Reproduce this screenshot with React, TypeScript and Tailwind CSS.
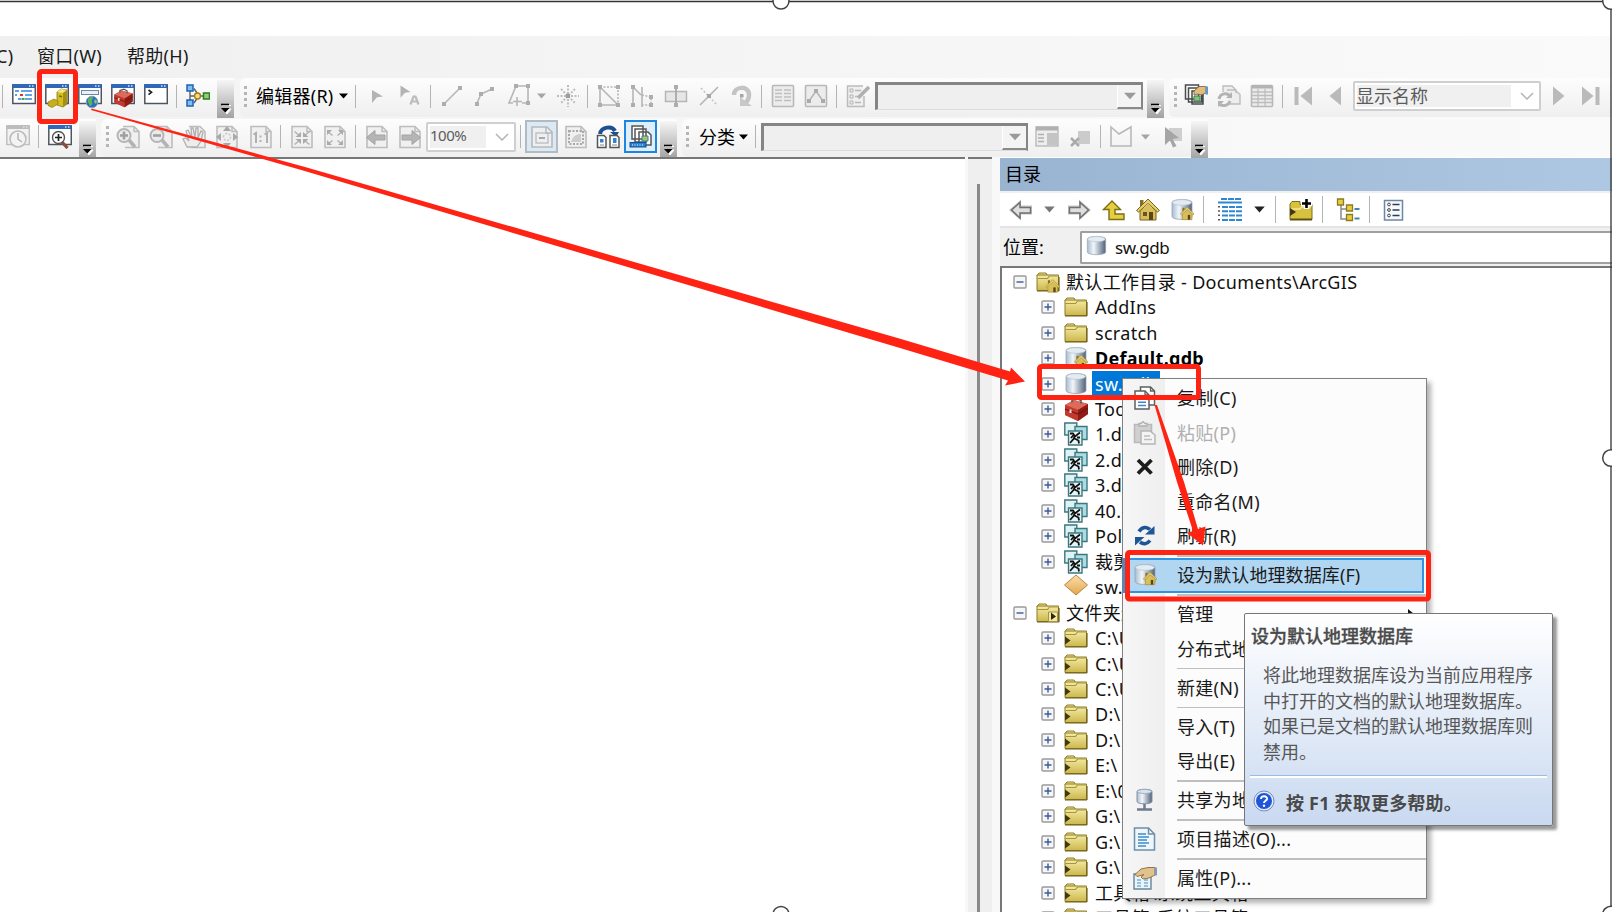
import type { ReactNode } from 'react';
import clsx from 'clsx';

type IconProps = { className?: string };

/* ---------- primitives ---------- */

function Svg({ className, children }: IconProps & { children: ReactNode }) {
  return (
    <svg viewBox="0 0 24 24" className={clsx('w-6 h-6 shrink-0', className)} fill="none">
      {children}
    </svg>
  );
}

function Sep({ className }: IconProps) {
  return <div className={clsx('w-px h-[23px] shrink-0 bg-[#b4b4b4]', className)} />;
}

function Grip({ className }: IconProps) {
  return (
    <div className={clsx('flex flex-col gap-[3px] w-[3px] shrink-0', className)}>
      {[0, 1, 2, 3].map(i => (
        <div key={i} className="w-[3px] h-[3px] bg-[#b5b5b5]" />
      ))}
    </div>
  );
}

function Caret({ className }: IconProps) {
  return (
    <svg viewBox="0 0 9 6" className={clsx('w-[9px] h-[6px] shrink-0', className)} fill="currentColor">
      <path d="M0 .5h9L4.500 5.500z" />
    </svg>
  );
}

function Overflow({ className }: IconProps) {
  return (
    <div
      className={clsx(
        'w-[17px] h-[38px] shrink-0 self-start mt-[2px] flex justify-center items-end pb-[3px] bg-linear-to-b from-[#f6f6f6] to-[#a2a2a2]',
        className,
      )}
    >
      <svg viewBox="0 0 11 12" className="w-[11px] h-[12px]">
        <path d="M2 2.500h9M3 6h8l-4 5z" fill="#fff" stroke="#fff" />
        <path d="M1 1.500h8" stroke="#000" strokeWidth="1.600" />
        <path d="M1 5h8.500L5.250 9.500z" fill="#000" />
      </svg>
    </div>
  );
}

function Bar({ className, children }: IconProps & { children: ReactNode }) {
  return (
    <div className={clsx('flex items-center h-9 shrink-0', className)}>
      {children}
    </div>
  );
}

/** Old-style sunken combo with a raised drop button. */
function SunkenCombo({ className }: IconProps) {
  return (
    <div className={clsx('flex justify-end shrink-0 h-7 bg-[#efefef] border-t-[3px] border-l-[3px] border-[#858585] border-b border-b-[#dcdcdc] border-r-2', className)}>
      <div className="w-6 h-full flex items-center justify-center bg-[#f4f4f4] border-b-2 border-l border-l-white border-b-[#8a8a8a] text-[#9a9a9a]">
        <Caret className="w-[12px] h-[8px]" />
      </div>
    </div>
  );
}

function Combo({ className, inner, children }: IconProps & { inner: string; children: ReactNode }) {
  return (
    <div className={clsx('flex items-center shrink-0 h-[30px] bg-white border-2 border-[#cfcfcf] rounded-[2px] pl-[2px] text-[#5c5c5c]', className)}>
      <div className={clsx('h-[22px] flex items-center bg-[#f0f0f0]', inner)}>{children}</div>
      <svg viewBox="0 0 14 8" className="w-[14px] h-2 ml-auto mr-[5px]" fill="none">
        <path d="M1 1l6 6 6-6" stroke="#b4b4b4" strokeWidth="1.500" />
      </svg>
    </div>
  );
}

/* ---------- toolbar icons ---------- */

/** Window frame shared by the "open window" buttons. */
function WindowFrame({ className, children, disabled }: IconProps & { children: ReactNode; disabled?: boolean }) {
  return (
    <Svg className={className}>
      <rect x=".8" y="1" width="22.500" height="18.500" fill={disabled ? '#f2f2f2' : '#fff'} stroke={disabled ? '#c0c0c0' : '#4d5560'} strokeWidth="1.500" />
      <rect x=".5" y="0" width="23" height="4" fill={disabled ? '#bcbcbc' : '#2f68b8'} />
      <path d="M17 2h1.500M20 2h1.500" stroke="#cfe0f5" strokeWidth="1.300" />
      {children}
    </Svg>
  );
}

function Toolbox() {
  return (
    <>
      <path d="M1 8l9-5 14 4v10l-10 7-13-6z" fill="#c9382c" />
      <path d="M1 8l9-5 14 4-10 6z" fill="#dd6a5b" />
      <path d="M1 8l13 5v11L1 18z" fill="#c23a2e" />
      <path d="M14 13l10-6v10l-10 7z" fill="#8f1c16" />
      <path d="M1 12l13 5 10-6" stroke="#74150f" strokeWidth="1.200" />
      <path d="M8 5.500V3l5-1.500 4 2v3" stroke="#555" strokeWidth="1.500" />
      <path d="M6.500 12.500v3.500" stroke="#f4dcd8" strokeWidth="2" />
    </>
  );
}

function TocWindow(p: IconProps) {
  return (
    <WindowFrame {...p}>
      <path d="M3 7h4M3 11h2M6 15h3" stroke="#2f7fd6" strokeWidth="1.600" />
      <path d="M9 7h11M13 11h7M13 15h7" stroke="#2f86dc" strokeWidth="1.600" />
      <path d="M8 11h3" stroke="#d63a2a" strokeWidth="2" />
      <path d="M9.500 15h3" stroke="#47a83a" strokeWidth="2" />
    </WindowFrame>
  );
}

function CatalogWindow(p: IconProps) {
  return (
    <WindowFrame {...p}>
      <path d="M12 8l4-3 6 1v14l-4 3-6-2z" fill="#d6bd22" stroke="#8c7a10" strokeWidth=".8" />
      <path d="M12 8l4-3 6 1-4 3z" fill="#f4e57a" />
      <path d="M18 9l4-3v14l-4 3z" fill="#a58f14" />
      <path d="M3 18l6-3 4 2v3l-6 3.500-4-2z" fill="#c8ae1c" stroke="#8c7a10" strokeWidth=".7" />
      <path d="M14 12l3 .8" stroke="#7b6b0c" strokeWidth="1.500" />
    </WindowFrame>
  );
}

function SearchWindow(p: IconProps) {
  return (
    <WindowFrame {...p}>
      <rect x="3.500" y="6.500" width="17" height="4" fill="#e8f0f8" stroke="#6f87a5" />
      <circle cx="14" cy="18" r="5.800" fill="#2c6dc0" stroke="#7d9fc5" />
      <path d="M10 15c2-3 5-2 5-1s-2 2-1 4-1 4-2 4-1-3-2-4z" fill="#5db456" />
      <path d="M17 15l2 2-1 3-2-2z" fill="#83cf6e" />
    </WindowFrame>
  );
}

function ToolboxWindow(p: IconProps) {
  return (
    <WindowFrame {...p}>
      <g transform="translate(2.500 4) scale(.8)">
        <Toolbox />
      </g>
    </WindowFrame>
  );
}

function PythonWindow(p: IconProps) {
  return (
    <WindowFrame {...p}>
      <path d="M4.500 6l3 2.300-3 2.300" stroke="#222" strokeWidth="1.700" />
    </WindowFrame>
  );
}

function ModelBuilder(p: IconProps) {
  return (
    <Svg {...p}>
      <path d="M4 4v16M4 12h14M8 4.500l4 6M8 19l4-6" stroke="#5a6470" strokeWidth="1.400" />
      <rect x="1" y="1" width="6" height="6" fill="#7cc1f2" stroke="#1e63b0" strokeWidth="1.500" />
      <rect x="1" y="16" width="6" height="6" fill="#7cc1f2" stroke="#1e63b0" strokeWidth="1.500" />
      <circle cx="11.500" cy="12" r="3" fill="#f5de79" stroke="#a67d17" strokeWidth="1.400" />
      <rect x="17.500" y="9" width="6" height="6" fill="#8fd077" stroke="#2f7a25" strokeWidth="1.500" />
    </Svg>
  );
}

function Pointer(p: IconProps) {
  return (
    <Svg {...p}>
      <path d="M7 6l11 6.500-6 .8L7 19z" fill="#b3b3b3" />
    </Svg>
  );
}

function PointerA(p: IconProps) {
  return (
    <Svg {...p}>
      <path d="M4.500 1.500l10 6.500-5.500.8-4.500 5z" fill="#b3b3b3" />
      <path d="M14.500 20.500l3-8h2l3 8M16 17.500h5" stroke="#bcbcbc" strokeWidth="2.200" />
    </Svg>
  );
}

/** Disabled sketch tools: thin gray strokes with square vertices. */
function Sketch({ className, d, dotted, nodes }: IconProps & { d: string; dotted?: string; nodes: [number, number][] }) {
  return (
    <Svg className={className}>
      <path d={d} stroke="#b6b6b6" strokeWidth="1.600" />
      {dotted && <path d={dotted} stroke="#b6b6b6" strokeWidth="1.600" strokeDasharray="2 1.500" />}
      {nodes.map(([x, y]) => (
        <rect key={`${x}-${y}`} x={x - 2} y={y - 2} width="4" height="4" fill="#adadad" />
      ))}
    </Svg>
  );
}

function Burst(p: IconProps) {
  return (
    <Svg {...p}>
      <path d="M12 1v22M1 12h22M5 5l14 14M19 5L5 19" stroke="#bdbdbd" strokeWidth="2" strokeDasharray="2 1.500" />
      <rect x="10" y="10" width="4" height="4" fill="#9d9d9d" />
    </Svg>
  );
}

function CutPolygon(p: IconProps) {
  return (
    <Svg {...p}>
      <rect x="1.500" y="7.500" width="21" height="10" fill="#e6e6e6" stroke="#b6b6b6" strokeWidth="1.500" />
      <path d="M12 2v20" stroke="#a8a8a8" strokeWidth="1.800" />
      <path d="M10 1h4v4h-4zM10 19h4v4h-4z" fill="#adadad" />
    </Svg>
  );
}

function SplitTool(p: IconProps) {
  return (
    <Svg {...p}>
      <path d="M3 21L21 3" stroke="#b3b3b3" strokeWidth="1.600" />
      <path d="M4 4l16 17" stroke="#c0c0c0" strokeWidth="1.500" strokeDasharray="2 2" />
      <rect x="10" y="10" width="4" height="4" fill="#a6a6a6" />
    </Svg>
  );
}

function RotateTool(p: IconProps) {
  return (
    <Svg {...p}>
      <path d="M4 11c0-9 15-10 15 0 0 4-2 7-5 9" stroke="#c4c4c4" strokeWidth="4.500" />
      <path d="M10 13v9h12z" fill="#c8c8c8" />
      <rect x="10" y="10" width="3.500" height="3.500" fill="#a6a6a6" />
    </Svg>
  );
}

function SheetTable({ className, variant }: IconProps & { variant: 'columns' | 'sketch' | 'grid' }) {
  return (
    <Svg className={className}>
      <rect x="1.500" y="1.500" width="21" height="21" rx="1" fill="#ececec" stroke="#b8b8b8" strokeWidth="1.600" />
      {variant === 'columns' && (
        <path d="M4 6h7M4 9.500h7M4 13h7M4 16.500h7M13 6h7M13 9.500h7M13 13h7M13 16.500h7" stroke="#bfbfbf" strokeWidth="1.500" />
      )}
      {variant === 'sketch' && (
        <>
          <path d="M5 17l7-10 7 10" stroke="#b3b3b3" strokeWidth="1.500" />
          <path d="M3 15h4v4H3zM10 5h4v4h-4zM17 15h4v4h-4z" fill="#ababab" />
        </>
      )}
      {variant === 'grid' && (
        <>
          <path d="M2 3h20" stroke="#b3b3b3" strokeWidth="3" />
          <path d="M2 8h20M2 11.500h20M2 15h20M2 18.500h20M8 5v17M15 5v17" stroke="#bdbdbd" strokeWidth="1.300" />
        </>
      )}
    </Svg>
  );
}

function FeatureForm(p: IconProps) {
  return (
    <Svg {...p}>
      <path d="M17 2H1.500v20.500H18V12" fill="#efefef" stroke="#bcbcbc" strokeWidth="1.500" />
      <path d="M4 5h3v3H4zM4 11h3v3H4zM4 17h3v3H4z" stroke="#b3b3b3" />
      <path d="M9 6.500h6M9 12.500h3M9 18.500h6" stroke="#b8b8b8" strokeWidth="1.500" />
      <path d="M12 14L23 3" stroke="#b0b0b0" strokeWidth="3.500" />
    </Svg>
  );
}

function LayerProps(p: IconProps) {
  return (
    <Svg {...p}>
      <path d="M1.500 1h13v14h-13zM4.500 4h13v14h-13zM8 7h11v13H8z" fill="#fff" stroke="#4a4a4a" strokeWidth="1.500" />
      <path d="M10 12h6v5h-6z" fill="#8fc45c" stroke="#2f7f86" />
      <path d="M10 7l5-4.500h7v6.500l-5 2-3-1-4 1z" fill="#e0bd7a" stroke="#7d6230" strokeWidth=".8" />
      <path d="M21.500 2.500h2.500v8h-2.500z" fill="#5a9bd0" />
    </Svg>
  );
}

function RefreshPages(p: IconProps) {
  return (
    <Svg {...p}>
      <path d="M6 8V2h9l4 4v3M10 6h8l5 4.500V20H11" fill="#eee" stroke="#bdbdbd" strokeWidth="1.400" />
      <path d="M2 15c1-6 9-7 11-2M13 17c-2 6-9 5-11 3" stroke="#b3b3b3" strokeWidth="3" />
      <path d="M9 14h6V8zM1 23v-6h6z" fill="#b3b3b3" />
    </Svg>
  );
}

function Step({ className, dir, bar }: IconProps & { dir: 'left' | 'right'; bar?: boolean }) {
  return (
    <Svg className={className}>
      <g transform={dir === 'left' ? 'translate(24 0) scale(-1 1)' : undefined}>
        <path d={bar ? 'M3 2.500v19L14.500 12z' : 'M7 2.500v19L18.500 12z'} fill="#bababa" />
        {bar && <path d="M18.500 3v18" stroke="#bababa" strokeWidth="4" />}
      </g>
    </Svg>
  );
}

function ClockWindow(p: IconProps) {
  return (
    <WindowFrame {...p} disabled>
      <circle cx="12" cy="14" r="8" fill="#f3f3f3" stroke="#bcbcbc" strokeWidth="1.600" />
      <path d="M12 8v6l4 3" stroke="#b5b5b5" strokeWidth="1.500" />
    </WindowFrame>
  );
}

function MagnifierWindow(p: IconProps) {
  return (
    <WindowFrame {...p}>
      <path d="M14 17l5.500 6" stroke="#8e4a3d" strokeWidth="3.200" />
      <circle cx="10.500" cy="12.500" r="6" fill="#fff" stroke="#555" strokeWidth="1.400" />
      <path d="M7 12.500h7M10.500 9v7" stroke="#222" strokeWidth="1.700" />
    </WindowFrame>
  );
}

/** Disabled layout-view page with a glyph over it. */
function Page({ className, children }: IconProps & { children: ReactNode }) {
  return (
    <Svg className={className}>
      <path d="M2 1.500h15l5 5v16H2z" fill="#f0f0f0" stroke="#bdbdbd" strokeWidth="1.600" />
      <path d="M17 1.500v5h5" stroke="#bdbdbd" strokeWidth="1.500" />
      {children}
    </Svg>
  );
}

function PageZoom({ className, minus }: IconProps & { minus?: boolean }) {
  return (
    <Svg className={className}>
      <path d="M7 1.500h11l5 5v16H9" fill="#f0f0f0" stroke="#bdbdbd" strokeWidth="1.600" />
      <path d="M18 1.500v5h5" stroke="#bdbdbd" strokeWidth="1.500" />
      <path d="M13 15l6 7" stroke="#b3b3b3" strokeWidth="3.500" />
      <circle cx="8" cy="10.500" r="6.500" fill="#ebebeb" stroke="#b5b5b5" strokeWidth="2" />
      <path d={minus ? 'M4 10.500h8' : 'M4 10.500h8M8 6.500v8'} stroke="#9f9f9f" strokeWidth="2.600" />
    </Svg>
  );
}

function PageHand(p: IconProps) {
  return (
    <Svg {...p}>
      <path d="M7 1.500h11l5 5v16H9" fill="#f0f0f0" stroke="#bdbdbd" strokeWidth="1.600" />
      <path d="M5 22l-4-8 3-1 3 3-3-10 2-1 4 8-1-10h2l2 9 1-9h2v10l3-7 2 1-2 9-4 6z" fill="#ededed" stroke="#b0b0b0" strokeWidth="1.300" />
    </Svg>
  );
}

function PageFull(p: IconProps) {
  return (
    <Page {...p}>
      <path d="M12 1l4 5H8zM12 23l4-5H8zM1 12l5-4v8zM23 12l-5-4v8z" fill="#a8a8a8" />
      <path d="M8.500 12a3.500 3.500 0 1 1 7 0 3.500 3.500 0 1 1-7 0" stroke="#c8c8c8" strokeWidth="1.500" strokeDasharray="2 1.500" />
    </Page>
  );
}

function PageOneToOne(p: IconProps) {
  return (
    <Page {...p}>
      <path d="M4.500 9.500L7 8v10M15.500 9.500L18 8v10M11.500 10.500v2M11.500 15v2" stroke="#b0b0b0" strokeWidth="2" />
    </Page>
  );
}

function PageArrows({ className, out }: IconProps & { out?: boolean }) {
  return (
    <Page className={className}>
      <path d="M4.500 6.500l5 4M19.500 6.500l-5 4M4.500 19.500l5-4M19.500 19.500l-5-4" stroke="#b3b3b3" strokeWidth="1.600" />
      <path
        d={out ? 'M4 5h5L4 10zM20 5h-5l5 5zM4 20h5l-5-5zM20 20h-5l5-5z' : 'M11 12H5.500L11 7zM13 12h5.500L13 7zM11 14H5.500l5.500 5zM13 14h5.500L13 19z'}
        fill="#aaa"
      />
    </Page>
  );
}

function PageMove({ className, right }: IconProps & { right?: boolean }) {
  return (
    <Page className={className}>
      <g transform={right ? 'translate(24 0) scale(-1 1)' : undefined}>
        <path d="M1.500 12.500L10 5.500v4.500h10v5H10v4.500z" fill="#b5b5b5" stroke="#a3a3a3" />
      </g>
    </Page>
  );
}

function DataView(p: IconProps) {
  return (
    <Svg {...p}>
      <path d="M2 2h15l5 5v15H2z" fill="#efefef" stroke="#b3bac0" strokeWidth="1.600" />
      <path d="M16 2v6h6" stroke="#b3bac0" strokeWidth="1.500" />
      <rect x="6" y="8" width="12" height="10" stroke="#b6bcc2" strokeWidth="1.300" />
      <path d="M9 13h6" stroke="#a3abb2" strokeWidth="2" />
    </Svg>
  );
}

function FocusFrame(p: IconProps) {
  return (
    <Page {...p}>
      <rect x="5" y="6" width="14" height="13" stroke="#a8a8a8" strokeWidth="2" strokeDasharray="2 1.500" />
      <path d="M7 17c2-6 5-8 10-8v8z" fill="#cdcdcd" />
    </Page>
  );
}

function ChangeLayout(p: IconProps) {
  return (
    <Svg {...p}>
      <path d="M4 9C5 2 16 0 19 6" stroke="#1d4f91" strokeWidth="4" />
      <path d="M14 7h9l-3 5z" fill="#1d4f91" />
      <path d="M1.500 10.500H8l2 2v10H1.500zM14 10.500h7l2 2v10h-9z" fill="#fff" stroke="#555" strokeWidth="1.500" />
      <path d="M4 14h3.500v3.500H4zM17 13h3.500v5H17z" fill="#2b84d8" />
      <path d="M4 20h4M16 20h5" stroke="#888" />
    </Svg>
  );
}

function DrivenPages(p: IconProps) {
  return (
    <Svg {...p}>
      <path d="M3 1h11v13H3zM6 4h11v13H6zM10 7h9l3 3v10H10z" fill="#fff" stroke="#555" strokeWidth="1.500" />
      <path d="M13 11h6v5h-6z" fill="#9ccc62" stroke="#4576a8" />
      <rect x="1" y="17.500" width="16" height="4.500" fill="#2580d8" stroke="#194f8c" />
      <path d="M3 20h12" stroke="#fff" strokeDasharray="1 1.500" />
    </Svg>
  );
}

function ClassTable(p: IconProps) {
  return (
    <Svg {...p}>
      <rect x="1" y="2" width="22" height="19" fill="#ededed" stroke="#bdbdbd" strokeWidth="1.500" />
      <path d="M1 3.500h22" stroke="#b0b0b0" strokeWidth="4" />
      <rect x="12" y="8" width="11" height="12" fill="#c4c4c4" />
      <path d="M3 9.500h6M3 13h6M3 16.500h6" stroke="#b0b0b0" strokeWidth="1.400" />
    </Svg>
  );
}

function RemoveClass(p: IconProps) {
  return (
    <Svg {...p}>
      <rect x="10" y="6" width="12" height="13" fill="#cbcbcb" />
      <path d="M3 13l8 8M11 13l-8 8" stroke="#aaa" strokeWidth="2.500" />
    </Svg>
  );
}

function PolygonShape(p: IconProps) {
  return (
    <Svg {...p}>
      <path d="M2 2l8 7 12-7v19H2z" stroke="#b8b8b8" strokeWidth="1.600" />
    </Svg>
  );
}

function SelectPixels(p: IconProps) {
  return (
    <Svg {...p}>
      <rect x="7" y="3" width="13" height="13" fill="#cfcfcf" />
      <path d="M3 2l14 11-6.500 1 4 7-3.500 1.500-3-7-5 4.500z" fill="#a5a5a5" />
    </Svg>
  );
}

/* ---------- catalog icons ---------- */

function HouseShape({ small }: { small?: boolean }) {
  return (
    <>
      <path d="M4 11h16v11H4z" fill="#d8bf5a" stroke={small ? '#a08838' : '#7a6420'} />
      <path d="M4 2h3.500v6L4 10z" fill="#8a6c2a" />
      <path d="M12 1L.5 12.500l2 1.500L12 5.500l9.500 8.500 2-1.500z" fill="#e6cf68" stroke={small ? '#a08838' : '#7a6420'} />
      <path d="M12 6l7 6.500V14H5v-1.500z" fill="#d8bf5a" />
      <path d="M13 14h4v8h-4z" fill="#5c4515" />
      {!small && <path d="M7 14h4v4H7z" fill="#6b5424" />}
    </>
  );
}

function CylinderShape() {
  return (
    <>
      <path d="M2 4.500c0-4 20-4 20 0v14c0 4-20 4-20 0z" fill="url(#cyl)" stroke="#9aa6b4" strokeWidth=".8" />
      <ellipse cx="12" cy="4.500" rx="9.500" ry="2.800" fill="#e3ebf3" stroke="#b9c6d3" strokeWidth=".7" />
    </>
  );
}

function House(p: IconProps) {
  return (
    <Svg {...p}>
      <HouseShape />
    </Svg>
  );
}

function Geodatabase(p: IconProps) {
  return (
    <Svg {...p}>
      <CylinderShape />
    </Svg>
  );
}

function DefaultGeodatabase(p: IconProps) {
  return (
    <Svg {...p}>
      <CylinderShape />
      <g transform="translate(10 8.500) scale(.6)">
        <HouseShape small />
      </g>
    </Svg>
  );
}

function Folder({ className, badge }: IconProps & { badge?: 'home' | 'link' | 'connect' }) {
  return (
    <Svg className={className}>
      <path d="M1 5.500L3 3h7l1.500 2.500" fill="#efe28a" stroke="#8c7a25" />
      <path d="M1 5h21.500v15.500H1z" fill="url(#folder)" stroke="#8c7a25" />
      <path d="M1.500 8.500h10l2-2.500h9" stroke="#a8943a" strokeWidth="1.200" />
      <path d="M1 21h22M23 7v14" stroke="#6d5f1c" strokeWidth="1.200" />
      {badge === 'home' && (
        <g transform="translate(9.500 9) scale(.6)">
          <HouseShape small />
        </g>
      )}
      {badge === 'connect' && <path d="M12.500 11h9v9.500h-9z" fill="#f3e9ad" stroke="#a8943a" />}
      {badge === 'connect' && <path d="M15 11.500v7.500l5-3.500z" fill="#2d2708" />}
      {badge === 'link' && <path d="M1 10.500v8l5.500-4z" fill="#3f3810" />}
    </Svg>
  );
}

function ToolboxIcon(p: IconProps) {
  return (
    <Svg {...p}>
      <Toolbox />
    </Svg>
  );
}

function CadDataset(p: IconProps) {
  return (
    <Svg {...p}>
      <path d="M.8 1h12v12H.8z" fill="#dff3f5" stroke="#3d7780" strokeWidth="1.400" />
      <path d="M11 4.500h12v13H11z" fill="#a9dde2" stroke="#3d7780" strokeWidth="1.400" />
      <path d="M4.500 9h13.500v14H4.500z" fill="#e4f5f6" stroke="#3d7780" strokeWidth="1.400" />
      <path d="M6 11.500h3l2 3 5-4M11 14l-1.500 3-3.500 4M10.500 16.500l4 2 .5 3M7 16l3-3.500M13 15.500h3" stroke="#111" strokeWidth="1.800" />
    </Svg>
  );
}

function LayerFile(p: IconProps) {
  return (
    <Svg {...p}>
      <path d="M12 2l11.500 10L12 22 .5 12z" fill="url(#layer)" stroke="#b9853c" />
    </Svg>
  );
}

function NavArrow({ className, right }: IconProps & { right?: boolean }) {
  return (
    <Svg className={className}>
      <g transform={right ? 'translate(24 0) scale(-1 1)' : undefined}>
        <path d="M0 12L12 1.500v6h11v9H12v6z" fill="#c4c4c4" />
        <path d="M2.500 12l8.500-7.500v5h10.500v5.500H11v5z" fill="#dedede" stroke="#707070" strokeWidth="1.500" />
      </g>
    </Svg>
  );
}

function UpLevel(p: IconProps) {
  return (
    <Svg {...p}>
      <path d="M10 3l8.500 8.500H13V16h9v5.500H7v-10H1.500z" fill="#e5cf3e" stroke="#7d6c18" strokeWidth="1.400" />
    </Svg>
  );
}

function ContentsView(p: IconProps) {
  return (
    <Svg {...p}>
      <path d="M3 1h20" stroke="#2f86d2" strokeWidth="1.800" strokeDasharray="6 1" />
      <path d="M0 4.500h24" stroke="#2f86d2" strokeWidth="2" />
      <path d="M4 9h20M4 13.300h20M4 17.600h20M4 22h20" stroke="#2f86d2" strokeWidth="2" strokeDasharray="6 1" />
      <path d="M1 8v15" stroke="#222" strokeWidth="1.500" strokeDasharray="1.500 2.800" />
    </Svg>
  );
}

function AddFolder(p: IconProps) {
  return (
    <Svg {...p}>
      <path d="M1 6l2-2.500h8v3h12v15H1z" fill="#d8c13f" stroke="#7d6c18" />
      <path d="M2 11h9l2-2h9" stroke="#f3e69a" strokeWidth="1.500" />
      <path d="M1 10v8l6-4z" fill="#3f3810" />
      <path d="M1 21.500h22" stroke="#5d5010" strokeWidth="2" />
      <path d="M17.500.5v10.500M12 5.500h11" stroke="#fff" strokeWidth="5.500" />
      <path d="M17.500 1v9M13 5.500h9" stroke="#000" strokeWidth="2.600" />
    </Svg>
  );
}

function TreeView(p: IconProps) {
  return (
    <Svg {...p}>
      <path d="M5 7v14h6M5 11h6" stroke="#8a8a8a" strokeWidth="1.500" />
      <path d="M1.500 1h6v6h-6zM10.500 7h6v6h-6zM10.500 16.500h6v6h-6z" fill="#e5cf3e" stroke="#8c7a25" strokeWidth="1.300" />
      <path d="M18.500 11h5M18.500 20.500h5" stroke="#3c87a8" strokeWidth="2" />
    </Svg>
  );
}

function OptionsList(p: IconProps) {
  return (
    <Svg {...p}>
      <rect x="3.500" y="2.500" width="18" height="19.500" fill="#f7fafd" stroke="#6c87a5" strokeWidth="1.500" />
      <path d="M11.500 6.500h7M11.500 12h7M11.500 17.500h7" stroke="#2c3c52" strokeWidth="1.500" />
      <circle cx="8" cy="6.500" r="1.400" stroke="#444" />
      <circle cx="8" cy="12" r="1.400" stroke="#444" />
      <circle cx="8" cy="17.500" r="1.400" stroke="#444" />
    </Svg>
  );
}

/* ---------- context menu icons ---------- */

function CopyIcon(p: IconProps) {
  return (
    <Svg {...p}>
      <path d="M7.500 1h10l4 4v14h-14z" fill="#fff" stroke="#5f5f5f" strokeWidth="1.500" />
      <path d="M2 5h10l4 4v14H2z" fill="#fff" stroke="#5f5f5f" strokeWidth="1.500" />
      <path d="M12 5v4h4M17.500 1v4h4" stroke="#5f5f5f" strokeWidth="1.300" />
      <path d="M5 13h8M5 16.300h8M5 19.600h8" stroke="#3f86cc" strokeWidth="1.500" />
    </Svg>
  );
}

function PasteIcon(p: IconProps) {
  return (
    <Svg {...p}>
      <path d="M1.500 3.500h17v18h-17z" fill="#d0d0d0" stroke="#b8b8b8" strokeWidth="1.500" />
      <path d="M6 5V2.500h2l2-2 2 2h2V5z" fill="#eee" stroke="#b0b0b0" strokeWidth="1.300" />
      <path d="M8 10h9l5 4v9H8z" fill="#f4f4f4" stroke="#b5b5b5" strokeWidth="1.500" />
      <path d="M11 15h6M11 18.500h8" stroke="#bdbdbd" strokeWidth="1.500" />
    </Svg>
  );
}

function DeleteIcon(p: IconProps) {
  return (
    <Svg {...p}>
      <path d="M5 5l13.500 13.500M18.500 5L5 18.500" stroke="#1c1c1c" strokeWidth="3.800" />
    </Svg>
  );
}

function RefreshIcon(p: IconProps) {
  return (
    <Svg {...p}>
      <path d="M6 7.500c3-5 8-5 11-2" stroke="#1d5596" strokeWidth="3.600" />
      <path d="M21.500 2v8.500H12z" fill="#1d5596" />
      <path d="M17 16.500c-3 4-7 4-10 1.500" stroke="#1d5596" strokeWidth="3.600" />
      <path d="M2 21.500v-8.500h9.500z" fill="#1d5596" />
    </Svg>
  );
}

function ShareIcon(p: IconProps) {
  return (
    <Svg {...p}>
      <path d="M4 3.500c0-3 15-3 15 0v10c0 3-15 3-15 0z" fill="url(#cyl)" stroke="#8291a2" />
      <ellipse cx="11.500" cy="3.500" rx="7" ry="2" fill="#d9e3ee" stroke="#9fb0c2" />
      <path d="M11.500 16v5M4 21.500h15" stroke="#6c7c8e" strokeWidth="2.500" />
    </Svg>
  );
}

function DescriptionIcon(p: IconProps) {
  return (
    <Svg {...p}>
      <path d="M1.500 1h14l6 6v16h-20z" fill="#eef5fb" stroke="#6d8fa9" strokeWidth="1.500" />
      <path d="M15.500 1v6h6" stroke="#6d8fa9" strokeWidth="1.500" />
      <path d="M5 7h8M5 10h11M5 13h9M5 16h11M5 19h8" stroke="#3e8cc9" strokeWidth="1.500" />
    </Svg>
  );
}

function PropertiesIcon(p: IconProps) {
  return (
    <Svg {...p}>
      <path d="M1 8h17v15H1z" fill="#eaf4fa" stroke="#6a8496" strokeWidth="1.400" />
      <path d="M4 14h4M4 17h4M4 20h4M11 14h4M11 17h4M11 20h4" stroke="#79b0d4" strokeWidth="1.400" />
      <path d="M2 8.500L8 3l7-1.500h7V9l-6 3-6 1-2-2 3-2.500-7 2z" fill="#e2c28c" stroke="#866a3c" strokeWidth=".9" />
      <path d="M21 1.500h3v8h-3z" fill="#8b9aa6" />
    </Svg>
  );
}

/* ---------- toolbars ---------- */

function Toolbars() {
  return (
    <div className="h-[79px] bg-linear-to-r from-[#f3f3f3] to-[#fafafa]">
      <div className="flex h-[41px]">
        <Bar className="w-[234px] h-[39px] pb-[3px] bg-linear-to-b from-[#fdfdfd] to-[#efefef]">
          <Sep className="ml-[2px]" />
          <TocWindow className="ml-[9px]" />
          <CatalogWindow className="ml-[9px]" />
          <SearchWindow className="ml-[9px]" />
          <ToolboxWindow className="ml-[9px]" />
          <PythonWindow className="ml-[9px]" />
          <Sep className="ml-2" />
          <ModelBuilder className="ml-[9px]" />
          <Overflow className="ml-[7px]" />
        </Bar>
        <Bar className="ml-[6px] w-[924px] h-[39px] pb-[3px] rounded-l-md bg-linear-to-b from-[#fdfdfd] to-[#efefef]">
          <Grip className="ml-1" />
          <span className="ml-[9px] w-[79px] shrink-0 text-black whitespace-nowrap tracking-[0.25px]">编辑器(R)</span>
          <Caret className="ml-1 text-black" />
          <Sep className="ml-[7px]" />
          <Pointer className="ml-[9px]" />
          <PointerA className="ml-[7px]" />
          <Sep className="ml-[10px]" />
          <Sketch className="ml-[9px]" d="M4 20L20 4" nodes={[[4, 20], [20, 4]]} />
          <Sketch className="ml-[9px]" d="M4 19l4-9 11-5" nodes={[[4, 20], [8, 10], [19, 5]]} />
          <Sketch className="ml-[10px]" d="M9 2h12v17h-6M9 2L2 19h4M10 13v9M6 17.500h9" nodes={[[9, 2], [21, 2], [21, 19]]} />
          <Caret className="ml-[6px] text-[#a5a5a5]" />
          <Burst className="ml-[10px]" />
          <Sep className="ml-[7px]" />
          <Sketch className="ml-[9px]" d="M3 3v18h18L3 3" dotted="M3 3h18v18" nodes={[[3, 3], [21, 3], [3, 21], [21, 21]]} />
          <Sketch className="ml-[9px]" d="M3 21V3l8 8M12 3v20" dotted="M12 11l9 2v8h-9" nodes={[[3, 3], [3, 21], [21, 13], [21, 21]]} />
          <CutPolygon className="ml-[10px]" />
          <SplitTool className="ml-[9px]" />
          <RotateTool className="ml-[9px]" />
          <Sep className="ml-[7px]" />
          <SheetTable className="ml-[9px]" variant="columns" />
          <SheetTable className="ml-[9px]" variant="sketch" />
          <Sep className="ml-2" />
          <FeatureForm className="ml-[9px]" />
          <SunkenCombo className="ml-[5px] w-[268px]" />
          <Overflow className="ml-1" />
        </Bar>
        <Bar className="ml-[5px] w-[443px] h-[39px] pb-[3px] rounded-l-md bg-linear-to-b from-[#fdfdfd] to-[#efefef]">
          <Grip className="ml-[5px]" />
          <LayerProps className="ml-[7px]" />
          <RefreshPages className="ml-[9px]" />
          <SheetTable className="ml-[9px]" variant="grid" />
          <Sep className="ml-2" />
          <Step className="ml-2" dir="left" bar />
          <Step className="ml-[9px]" dir="left" />
          <Combo className="ml-[5px] w-[188px]" inner="w-[154px]">
            <span className="-ml-px -mt-px">显示名称</span>
          </Combo>
          <Step className="ml-[5px]" dir="right" />
          <Step className="ml-[9px]" dir="right" bar />
        </Bar>
      </div>

      <div className="flex h-[38px]">
        <Bar className="w-24 h-[38px] pb-[3px] bg-linear-to-b from-[#fdfdfd] to-[#efefef]">
          <ClockWindow className="ml-[6px]" />
          <Sep className="ml-2" />
          <MagnifierWindow className="ml-[9px]" />
          <Overflow className="ml-[7px]" />
        </Bar>
        <Bar className="ml-[5px] w-[576px] h-[38px] pb-[3px] rounded-l-md bg-linear-to-b from-[#fdfdfd] to-[#efefef]">
          <Grip className="ml-[5px]" />
          <PageZoom className="ml-[7px]" />
          <PageZoom className="ml-[9px]" minus />
          <PageHand className="ml-[9px]" />
          <PageFull className="ml-[9px]" />
          <PageOneToOne className="ml-[10px]" />
          <Sep className="ml-[7px]" />
          <PageArrows className="ml-[9px]" />
          <PageArrows className="ml-[9px]" out />
          <Sep className="ml-2" />
          <PageMove className="ml-[9px]" />
          <PageMove className="ml-[9px]" right />
          <Combo className="ml-1 w-[90px]" inner="w-[56px]">
            <span className="text-[15px] -mt-[3px] tracking-[-0.5px]">100%</span>
          </Combo>
          <Sep className="ml-1" />
          <div className="ml-1 w-[33px] h-[33px] shrink-0 flex items-center justify-center bg-[#dce8f2] border-2 border-[#b1bbc4]">
            <DataView />
          </div>
          <FocusFrame className="ml-[6px]" />
          <ChangeLayout className="ml-2" />
          <div className="ml-1 w-[33px] h-[33px] shrink-0 flex items-center justify-center bg-[#dfeefb] border-2 border-[#1c87e0]">
            <DrivenPages />
          </div>
          <Overflow className="ml-[3px]" />
        </Bar>
        <Bar className="ml-[5px] w-[526px] h-[38px] pb-[3px] rounded-l-md bg-linear-to-b from-[#fdfdfd] to-[#efefef]">
          <Grip className="ml-1" />
          <span className="ml-[10px] w-9 shrink-0 text-black">分类</span>
          <Caret className="ml-1 mr-px text-black" />
          <Sep className="ml-[6px]" />
          <SunkenCombo className="ml-[5px] w-[267px]" />
          <ClassTable className="ml-[7px]" />
          <RemoveClass className="ml-[9px]" />
          <Sep className="ml-2" />
          <PolygonShape className="ml-2" />
          <Caret className="ml-2 text-[#a5a5a5]" />
          <SelectPixels className="ml-3" />
          <Overflow className="ml-[5px]" />
        </Bar>
      </div>
    </div>
  );
}

/* ---------- catalog tree ---------- */

type NodeKind = 'folder' | 'link' | 'default-gdb' | 'gdb' | 'toolbox' | 'cad' | 'layer' | 'home' | 'connect';
type TreeNode = { label: string; kind: NodeKind; root?: boolean };

const nodes: TreeNode[] = [
  { label: '默认工作目录 - Documents\\ArcGIS', kind: 'home', root: true },
  { label: 'AddIns', kind: 'folder' },
  { label: 'scratch', kind: 'folder' },
  { label: 'Default.gdb', kind: 'default-gdb' },
  { label: 'sw.gdb', kind: 'gdb' },
  { label: 'Toolbox.tbx', kind: 'toolbox' },
  { label: '1.dwg', kind: 'cad' },
  { label: '2.dwg', kind: 'cad' },
  { label: '3.dwg', kind: 'cad' },
  { label: '40.dwg', kind: 'cad' },
  { label: 'Polyline', kind: 'cad' },
  { label: '裁剪', kind: 'cad' },
  { label: 'sw.lyr', kind: 'layer' },
  { label: '文件夹连接', kind: 'connect', root: true },
  { label: 'C:\\U', kind: 'link' },
  { label: 'C:\\U', kind: 'link' },
  { label: 'C:\\U', kind: 'link' },
  { label: 'D:\\', kind: 'link' },
  { label: 'D:\\', kind: 'link' },
  { label: 'E:\\', kind: 'link' },
  { label: 'E:\\0', kind: 'link' },
  { label: 'G:\\', kind: 'link' },
  { label: 'G:\\1', kind: 'link' },
  { label: 'G:\\1', kind: 'link' },
  { label: '工具箱\\系统工具箱', kind: 'link' },
  { label: '工具箱\\系统工具箱', kind: 'link' },
];

function NodeIcon({ kind, className }: IconProps & { kind: NodeKind }) {
  switch (kind) {
    case 'home':
      return <Folder className={className} badge="home" />;
    case 'connect':
      return <Folder className={className} badge="connect" />;
    case 'link':
      return <Folder className={className} badge="link" />;
    case 'folder':
      return <Folder className={className} />;
    case 'default-gdb':
      return <DefaultGeodatabase className={className} />;
    case 'gdb':
      return <Geodatabase className={className} />;
    case 'toolbox':
      return <ToolboxIcon className={className} />;
    case 'cad':
      return <CadDataset className={className} />;
    default:
      return <LayerFile className={className} />;
  }
}

function Expander({ open, hidden }: { open?: boolean; hidden?: boolean }) {
  return (
    <svg viewBox="0 0 14 14" className={clsx('w-[14px] h-[14px] shrink-0', hidden && 'invisible')}>
      <rect x="1" y="1" width="12" height="12" rx="1" fill="#f6f6f6" stroke="#9a9a9a" strokeWidth="1.400" />
      <path d={open ? 'M3.500 7h7' : 'M3.500 7h7M7 3.500v7'} stroke="#3d5a9e" strokeWidth="1.400" />
    </svg>
  );
}

function TreeRow({ node }: { node: TreeNode }) {
  const selected = node.label === 'sw.gdb';
  return (
    <div className={clsx('flex items-center h-[25.46px] shrink-0', node.root ? 'pl-[11px]' : 'pl-[39px]')}>
      <Expander open={node.root} hidden={node.kind === 'layer'} />
      <NodeIcon kind={node.kind} className={clsx('ml-[9px]', node.kind === 'layer' && '-mt-1')} />
      <span
        className={clsx(
          'h-full flex items-center whitespace-nowrap pl-[3px] pr-[3px]',
          node.root ? 'ml-[3px] tracking-[0.33px]' : 'ml-1 tracking-[0.3px]',
          selected ? 'bg-[#0078d7] text-white' : 'text-[#111]',
          node.kind === 'default-gdb' && 'font-bold text-black',
        )}
      >
        {node.label}
      </span>
    </div>
  );
}

function CatalogPanel() {
  return (
    <div className="flex flex-col flex-1 min-w-0 mt-px bg-[#f0f0f0]">
      <div className="h-[33px] shrink-0 flex items-center pb-[2px] pl-[5px] bg-linear-to-r from-[#99b4d1] to-[#aec8e3] text-black">目录</div>
      <div className="flex items-center h-[35px] mt-[2px] shrink-0 border-b-2 border-[#e4e4e4] bg-white">
        <NavArrow className="ml-[9px]" />
        <Caret className="ml-[11px] w-[11px] mr-[-1px] h-[7px] text-[#777]" />
        <NavArrow className="ml-[13px]" right />
        <UpLevel className="ml-[11px]" />
        <House className="ml-[10px]" />
        <DefaultGeodatabase className="ml-[10px]" />
        <Sep className="ml-[9px] h-[27px] bg-[#8c8c8c]" />
        <ContentsView className="ml-[14px]" />
        <Caret className="ml-3 w-[11px] h-[7px] mr-[-1px] text-[#222]" />
        <Sep className="ml-[11px] h-[27px] bg-[#8c8c8c]" />
        <AddFolder className="ml-[13px]" />
        <Sep className="ml-[9px] h-[27px] bg-[#8c8c8c]" />
        <TreeView className="ml-[13px]" />
        <Sep className="ml-[9px] h-[27px] bg-[#8c8c8c]" />
        <OptionsList className="ml-[11px]" />
      </div>
      <div className="flex items-center h-[38px] shrink-0 pl-[3px]">
        <span className="w-[77px] text-black">位置:</span>
        <div className="flex items-center flex-1 h-[33px] border-2 border-r-0 border-[#a0a0a0] rounded-l-[2px] bg-white">
          <Geodatabase className="ml-[3px] -mt-[2px] w-[23px] h-[22px]" />
          <span className="ml-[7px] text-[17px] text-[#111] tracking-[-0.4px]">sw.gdb</span>
        </div>
      </div>
      <div className="flex flex-col flex-1 min-h-0 overflow-hidden pt-[1px] bg-white border-l-2 border-t-2 border-[#777]">
        {nodes.map((n, i) => (
          <TreeRow key={i} node={n} />
        ))}
      </div>
    </div>
  );
}

/* ---------- context menu ---------- */

type MenuEntry = { label: string; icon?: ReactNode; disabled?: boolean; active?: boolean; submenu?: boolean } | 'sep';

const menu: MenuEntry[] = [
  { label: '复制(C)', icon: <CopyIcon /> },
  { label: '粘贴(P)', icon: <PasteIcon />, disabled: true },
  { label: '删除(D)', icon: <DeleteIcon /> },
  { label: '重命名(M)' },
  { label: '刷新(R)', icon: <RefreshIcon /> },
  'sep',
  { label: '设为默认地理数据库(F)', icon: <DefaultGeodatabase />, active: true },
  'sep',
  { label: '管理', submenu: true },
  { label: '分布式地理数据库', submenu: true },
  'sep',
  { label: '新建(N)', submenu: true },
  'sep',
  { label: '导入(T)', submenu: true },
  { label: '导出(E)', submenu: true },
  'sep',
  { label: '共享为地理数据服务', icon: <ShareIcon /> },
  'sep',
  { label: '项目描述(O)...', icon: <DescriptionIcon /> },
  'sep',
  { label: '属性(P)...', icon: <PropertiesIcon /> },
];

function ContextMenu() {
  return (
    <div className="absolute left-[1122px] top-[378px] w-[305px] h-[521px] pt-[2px] border-[1.5px] border-[#808080] bg-[linear-gradient(to_right,#f6f6f6_0px,#efefef_42px,#fcfcfc_42px)] shadow-[4px_4px_5px_rgba(0,0,0,0.3)]">
      {menu.map((m, i) =>
        m === 'sep' ? (
          <div key={i} className="h-[4.500px] flex items-center pl-[54px]">
            <div className="w-full h-[1.500px] bg-[#bfbfbf]" />
          </div>
        ) : (
          <div
            key={i}
            className={clsx(
              'flex items-center h-[34.500px] mr-[2px] whitespace-nowrap',
              m.active ? 'bg-[#b1d6f2] shadow-[inset_0_0_0_2px_#3393df] tracking-[0.1px]' : 'tracking-[0.3px]',
              m.disabled ? 'text-[#b0b0b0]' : 'text-[#1a1a1a]',
            )}
          >
            <div className="w-[54px] pl-[10px] shrink-0">{m.icon}</div>
            {m.label}
            {m.submenu && (
              <svg viewBox="0 0 6 10" className="w-[6px] h-[10px] ml-auto mr-[10px]">
                <path d="M0 0l6 5-6 5z" fill="#111" />
              </svg>
            )}
          </div>
        ),
      )}
    </div>
  );
}

function HelpTooltip() {
  return (
    <div className="absolute left-[1244px] top-[613px] w-[309px] h-[213px] flex flex-col rounded-[2px] border-[1.5px] border-[#767676] bg-linear-to-b from-white to-[#c9d9f0] text-[#575757] shadow-[4px_4px_3px_rgba(0,0,0,0.4)]">
      <div className="mt-[9px] ml-[6px] h-[26px] leading-[26px] font-medium text-[#4a4a4a] [-webkit-text-stroke:0.300px]">设为默认地理数据库</div>
      <div className="mt-[14px] ml-[18px] leading-[25.500px] whitespace-nowrap">
        <div>将此地理数据库设为当前应用程序</div>
        <div>中打开的文档的默认地理数据库。</div>
        <div>如果已是文档的默认地理数据库则</div>
        <div>禁用。</div>
      </div>
      <div className="mt-[10px] mx-[5px] h-[3px] shrink-0 bg-white border-t-[1.500px] border-[#9dbce0]" />
      <div className="flex items-center h-[48px] pl-[8px] font-bold text-[#4a4a4a]">
        <svg viewBox="0 0 22 22" className="w-[22px] h-[22px] -mt-px">
          <circle cx="11" cy="11" r="10" fill="#e4ecfa" stroke="#7889bd" />
          <circle cx="11" cy="11" r="8" fill="#1f55d8" />
          <path d="M8 9c0-4 6.500-3.500 6 0-.3 1.800-3 1.800-3 4" fill="none" stroke="#fff" strokeWidth="2" />
          <circle cx="11" cy="15.800" r="1.200" fill="#fff" />
        </svg>
        <span className="ml-[11px] mt-[2px] tracking-[0.200px]">按 F1 获取更多帮助。</span>
      </div>
    </div>
  );
}

/* ---------- annotations ---------- */

function Annotations() {
  return (
    <svg viewBox="0 0 1612 912" className="absolute inset-0 w-full h-full pointer-events-none" fill="none">
      <g stroke="#ff2314" strokeWidth="5">
        <rect x="39.500" y="71.500" width="36" height="50" rx="2" />
        <rect x="1039.500" y="366.500" width="159" height="31" rx="2" />
        <rect x="1127.500" y="552.500" width="301" height="46.500" rx="2" />
      </g>
      <path d="M91.500 108.500L305 167 901 339 1010 371.500 1011 367.500 1025 381.500 1005 385.500 1008 380.500 900 348 303 170.500 91 110z" fill="#ff2314" />
      <path d="M1154.500 405L1157 405 1184 482 1198 529 1205.500 526.500 1203 545.500 1187 533 1193 531 1177 482z" fill="#ff2314" />

      <path d="M0 1.500H1612M1611 0V912" stroke="#333" strokeWidth="1.300" />
      <g fill="#fff" stroke="#444" strokeWidth="1.500">
        <circle cx="781" cy="1" r="8" />
        <circle cx="1611" cy="1" r="8.300" />
        <circle cx="1611" cy="458" r="8.300" />
        <circle cx="781" cy="914.500" r="8" />
        <circle cx="1611" cy="914.500" r="8.300" />
      </g>
    </svg>
  );
}

export default function App() {
  return (
    <div className="relative w-[1612px] h-[912px] overflow-hidden flex flex-col bg-white text-[18px] leading-none font-['Noto_Sans','Noto_Sans_CJK_SC',sans-serif]">
      {/* shared gradients */}
      <svg className="absolute w-0 h-0">
        <defs>
          <linearGradient id="cyl">
            <stop offset="0" stopColor="#a9bccf" />
            <stop offset=".35" stopColor="#f1f6fa" />
            <stop offset="1" stopColor="#4f6179" />
          </linearGradient>
          <linearGradient id="folder" x2="0" y2="1">
            <stop offset="0" stopColor="#f4eba6" />
            <stop offset="1" stopColor="#cdb74c" />
          </linearGradient>
          <linearGradient id="layer" x2="0" y2="1">
            <stop offset="0" stopColor="#fae0ac" />
            <stop offset="1" stopColor="#e3a64e" />
          </linearGradient>
        </defs>
      </svg>

      <div className="h-[42px] mt-9 shrink-0 flex items-center pb-[2px] bg-linear-to-r from-[#f0f0f0] to-[#fafafa] text-[#1a1a1a] whitespace-nowrap tracking-[0.3px]">
        <span className="-ml-[4px] w-[41px]">C)</span>
        <span className="w-[90px]">窗口(W)</span>
        <span>帮助(H)</span>
      </div>

      <Toolbars />

      <div className="flex flex-1 min-h-0">
        <div className="w-[965px] border-t-2 border-[#777] bg-white" />
        <div className="flex w-[35px] pl-[3px] pr-2 bg-[#f8f8f8]">
          <div className="w-6 border-t-2 border-[#777] bg-[#efefef] flex justify-center">
            <div className="w-[3px] mt-[25px] mr-1 bg-[#8a8a8a]" />
          </div>
        </div>
        <CatalogPanel />
      </div>

      <ContextMenu />
      <HelpTooltip />
      <Annotations />
    </div>
  );
}
